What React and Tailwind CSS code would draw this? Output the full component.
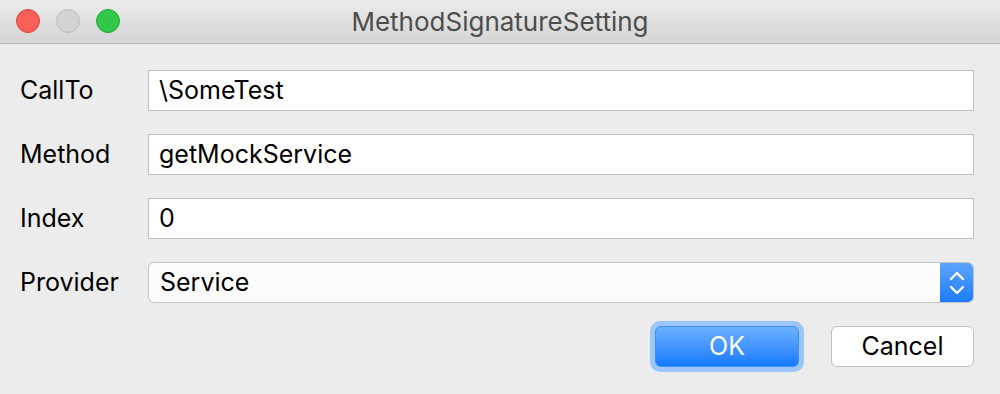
const font = { fontFamily: '"Inter", "Liberation Sans", sans-serif' };

const Field = ({ label, value }) => (
    <div className="flex items-center h-[41px]">
        <div className="w-[128px] text-[25px] text-black">{label}</div>
        <div className="flex-1 h-[41px] flex items-center bg-white border border-[#bfbfbf] px-[10px] text-[25px] text-black">
            {value}
        </div>
    </div>
);

export default function App() {
    return (
        <div className="w-[1000px] h-[394px] flex flex-col bg-[#ececec] overflow-hidden" style={font}>
            {/* title bar */}
            <div className="relative h-[44px] flex items-center justify-center bg-gradient-to-b from-[#ebebeb] to-[#d5d5d5] border-b border-[#b3b3b3]">
                <div className="absolute left-[16px] top-[9px] flex gap-[16px]">
                    <span className="w-[24px] h-[24px] rounded-full bg-[#fc5f57] border border-[#e0443e]" />
                    <span className="w-[24px] h-[24px] rounded-full bg-[#d3d3d3] border border-[#bdbdbd]" />
                    <span className="w-[24px] h-[24px] rounded-full bg-[#33c748] border border-[#24a73a]" />
                </div>
                <span className="text-[26px] text-[#4d4d4d]">MethodSignatureSetting</span>
            </div>

            {/* form */}
            <div className="flex flex-col gap-[23px] pl-[20px] pr-[26px] pt-[26px]">
                <Field label="CallTo" value="\SomeTest" />
                <Field label="Method" value="getMockService" />
                <Field label="Index" value="0" />
                <div className="flex items-center h-[41px]">
                    <div className="w-[128px] text-[25px] text-black">Provider</div>
                    <div className="flex-1 h-[41px] flex bg-[#fcfcfc] border border-[#c3c3c3] rounded-[6px] overflow-hidden">
                        <div className="flex-1 flex items-center px-[11px] text-[25px] text-black">Service</div>
                        <div className="w-[33px] flex items-center justify-center bg-gradient-to-b from-[#5aa4fb] to-[#1a7bfd]">
                            <svg width="16" height="26" viewBox="0 0 16 26" fill="none" stroke="white" strokeWidth="2.4" strokeLinecap="round" strokeLinejoin="round">
                                <path d="M2 9 L8 3 L14 9" />
                                <path d="M2 17 L8 23 L14 17" />
                            </svg>
                        </div>
                    </div>
                </div>
            </div>

            {/* buttons */}
            <div className="flex justify-end gap-[27px] pr-[26px] pt-[23px]">
                <div className="p-[5px] rounded-[10px] bg-[#9cc6f7] -my-[5px]">
                    <button className="w-[144px] h-[41px] rounded-[6px] bg-gradient-to-b from-[#6bb0fd] to-[#1179fe] border border-[#3d8ef5] text-white text-[25px]">
                        OK
                    </button>
                </div>
                <button className="w-[143px] h-[41px] rounded-[6px] bg-white border border-[#c0c0c0] text-black text-[25px]">
                    Cancel
                </button>
            </div>
        </div>
    );
}
